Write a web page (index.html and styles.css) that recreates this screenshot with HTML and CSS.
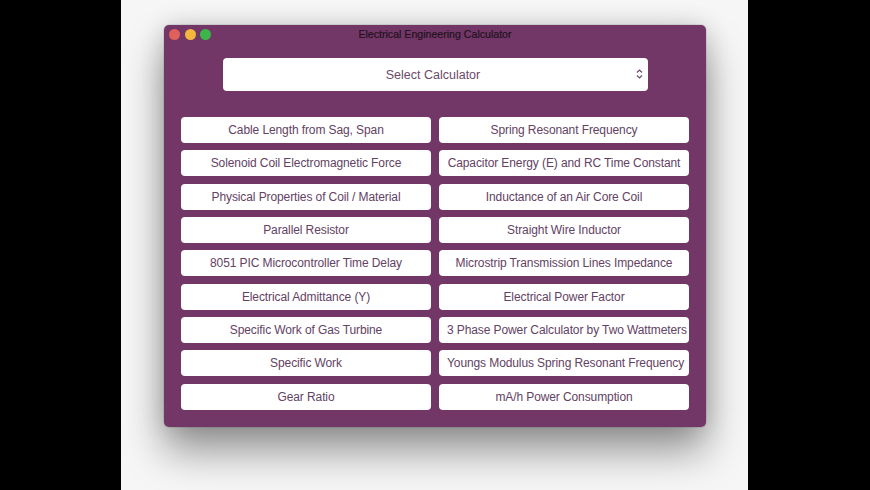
FILE: index.html
```html
<!DOCTYPE html>
<html>
<head>
<meta charset="utf-8">
<link rel="stylesheet" href="styles.css">
</head>
<body>
<div class="stage">
  <div class="window">
    <div class="titlebar">
      <div class="lights">
        <span class="light red"></span>
        <span class="light yellow"></span>
        <span class="light green"></span>
      </div>
      <div class="title">Electrical Engineering Calculator</div>
      <div></div>
    </div>
    <div class="select">
      <span class="select-label">Select Calculator</span>
      <svg class="chev" width="7" height="10" viewBox="0 0 7 10"><path d="M1 3.5 L3.5 1 L6 3.5 M1 6.5 L3.5 9 L6 6.5" fill="none" stroke="#6b4a6b" stroke-width="1.2"/></svg>
    </div>
    <div class="grid">
      <div class="btn">Cable Length from Sag, Span</div>
      <div class="btn">Spring Resonant Frequency</div>
      <div class="btn">Solenoid Coil Electromagnetic Force</div>
      <div class="btn">Capacitor Energy (E) and RC Time Constant</div>
      <div class="btn">Physical Properties of Coil / Material</div>
      <div class="btn">Inductance of an Air Core Coil</div>
      <div class="btn">Parallel Resistor</div>
      <div class="btn">Straight Wire Inductor</div>
      <div class="btn">8051 PIC Microcontroller Time Delay</div>
      <div class="btn">Microstrip Transmission Lines Impedance</div>
      <div class="btn">Electrical Admittance (Y)</div>
      <div class="btn">Electrical Power Factor</div>
      <div class="btn">Specific Work of Gas Turbine</div>
      <div class="btn">3 Phase Power Calculator by Two Wattmeters</div>
      <div class="btn">Specific Work</div>
      <div class="btn">Youngs Modulus Spring Resonant Frequency</div>
      <div class="btn">Gear Ratio</div>
      <div class="btn">mA/h Power Consumption</div>
    </div>
  </div>
</div>
</body>
</html>
```

FILE: styles.css
```css
html, body {
  margin: 0;
  padding: 0;
  background: #000;
}
body {
  font-family: "Liberation Sans", Arial, sans-serif;
}
.stage {
  width: 627px;
  height: 490px;
  margin-left: 121px;
  background: #f6f6f6;
  overflow: hidden;
  padding-top: 25px;
  box-sizing: border-box;
}
.window {
  width: 542px;
  height: 402px;
  margin-left: 43px;
  background: #733767;
  border-radius: 5px;
  box-shadow: 0 0 0 1px rgba(0,0,0,0.08), 0 24px 40px rgba(0,0,0,0.4), 0 0 24px rgba(0,0,0,0.14);
  box-sizing: border-box;
}
.titlebar {
  height: 16px;
  display: grid;
  grid-template-columns: 1fr auto 1fr;
  align-items: center;
  padding-top: 1px;
}
.lights {
  display: flex;
  gap: 4.5px;
  padding-left: 5px;
}
.light {
  width: 11px;
  height: 11px;
  border-radius: 50%;
  display: block;
}
.red { background: #e0605a; }
.yellow { background: #f2b73c; }
.green { background: #3cb54a; }
.title {
  font-size: 10.6px;
  color: #1e1220;
  -webkit-text-stroke: 0.2px #1e1220;
}
.select {
  margin: 16px auto 0;
  width: 425px;
  height: 33px;
  background: #fff;
  border-radius: 4px;
  display: flex;
  align-items: center;
  justify-content: center;
  position: relative;
}
.select-label {
  font-size: 12.5px;
  color: #6b4a6b;
  margin-left: -4px;
}
.chev {
  position: absolute;
  right: 5px;
  top: 11px;
}
.grid {
  margin-top: 26px;
  padding: 0 17px;
  display: grid;
  grid-template-columns: 250px 250px;
  column-gap: 8px;
  row-gap: 7.33px;
}
.btn {
  height: 26px;
  line-height: 26px;
  background: #fff;
  border-radius: 4px;
  color: #634263;
  font-size: 12px;
  letter-spacing: -0.1px;
  text-align: center;
  white-space: nowrap;
  overflow: hidden;
  padding: 0 8px;
}
```
